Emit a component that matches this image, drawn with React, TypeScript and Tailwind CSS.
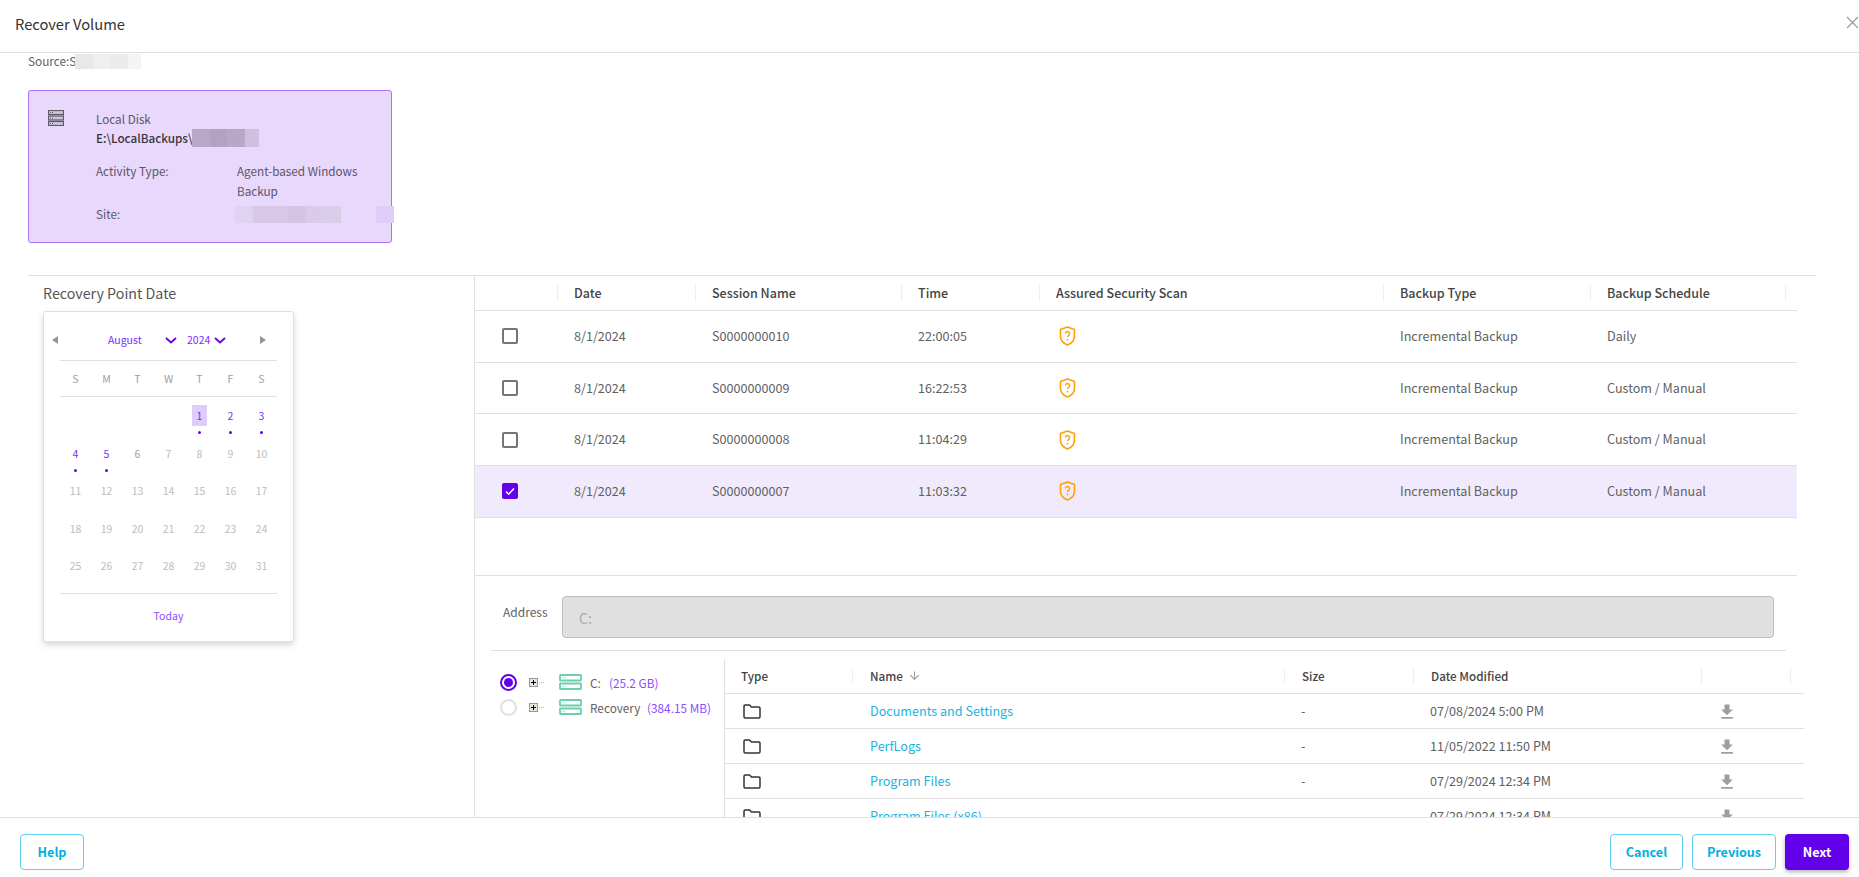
import { ArrowDown } from "lucide-react";

const sessions = [
  { name: "S0000000010", time: "22:00:05", schedule: "Daily", checked: false },
  { name: "S0000000009", time: "16:22:53", schedule: "Custom / Manual", checked: false },
  { name: "S0000000008", time: "11:04:29", schedule: "Custom / Manual", checked: false },
  { name: "S0000000007", time: "11:03:32", schedule: "Custom / Manual", checked: true },
];

const files = [
  { name: "Documents and Settings", modified: "07/08/2024 5:00 PM" },
  { name: "PerfLogs", modified: "11/05/2022 11:50 PM" },
  { name: "Program Files", modified: "07/29/2024 12:34 PM" },
  { name: "Program Files (x86)", modified: "07/29/2024 12:34 PM" },
];

const sessionCols = "grid grid-cols-[82px_138px_206px_138px_344px_207px_195px_12px]";
const fileCols = "grid grid-cols-[127px_432px_129px_288px_89px_14px]";

function Chevron() {
  return (
    <svg width="12" height="7" viewBox="0 0 12 7" fill="none" className="shrink-0">
      <path d="M1 1l5 4.5L11 1" stroke="#6200ea" strokeWidth="1.8" />
    </svg>
  );
}

function Shield() {
  return (
    <svg width="17" height="20" viewBox="0 0 17 20" fill="none" className="ml-[3px]">
      <path
        d="M8.5 1L15.5 3.5V10C15.5 14.5 12.5 17.5 8.5 19C4.5 17.5 1.5 14.5 1.5 10V3.5Z"
        stroke="#ffa000"
        strokeWidth="1.6"
        strokeLinejoin="round"
      />
      <path
        d="M6.4 7.6a2.1 2.1 0 1 1 3.2 1.8c-.7.4-1.1.9-1.1 1.7"
        stroke="#ffa000"
        strokeWidth="1.4"
      />
      <circle cx="8.5" cy="13.6" r="0.9" fill="#ffa000" />
    </svg>
  );
}

function DiskIcon() {
  return (
    <svg width="23" height="16" viewBox="0 0 23 16" fill="none" className="shrink-0">
      <rect x="1" y="1" width="21" height="5.5" rx="0.5" stroke="#6dcfb0" strokeWidth="1.8" />
      <rect x="1" y="9.5" width="21" height="5.5" rx="0.5" stroke="#6dcfb0" strokeWidth="1.8" />
      <path d="M3.5 3.7h3M3.5 12.2h3" stroke="#6dcfb0" strokeWidth="1" strokeDasharray="1 1" />
    </svg>
  );
}

function ServerIcon() {
  return (
    <svg width="16" height="16" viewBox="0 0 16 16" fill="none" className="shrink-0">
      <rect x="0.5" y="0.5" width="15" height="4" fill="#cfc6dc" stroke="#5f5a68" strokeWidth="1.2" />
      <rect x="0.5" y="6" width="15" height="4" fill="#cfc6dc" stroke="#5f5a68" strokeWidth="1.2" />
      <rect x="0.5" y="11.5" width="15" height="4" fill="#cfc6dc" stroke="#5f5a68" strokeWidth="1.2" />
      <path d="M2 2.5h3M2 8h3M2 13.5h3" stroke="#5f5a68" strokeDasharray="1 1" />
    </svg>
  );
}

function FolderIcon() {
  return (
    <svg width="18" height="15" viewBox="0 0 18 15" fill="none">
      <path
        d="M1 2.2C1 1.5 1.5 1 2.2 1H6.5L8.5 3H15.8C16.5 3 17 3.5 17 4.2V12.8C17 13.5 16.5 14 15.8 14H2.2C1.5 14 1 13.5 1 12.8Z"
        stroke="#333333"
        strokeWidth="1.5"
      />
    </svg>
  );
}

function DownloadIcon() {
  return (
    <svg width="20" height="20" viewBox="0 0 24 24" fill="#9e9e9e">
      <path d="M19 9h-4V3H9v6H5l7 7 7-7zM5 18v2h14v-2H5z" />
    </svg>
  );
}

function PlusBox() {
  return (
    <div className="flex items-center shrink-0">
      <div className="flex h-[9px] w-[9px] items-center justify-center border border-[#8a9bb0] bg-[#e8e4dc]">
        <svg width="7" height="7" viewBox="0 0 7 7">
          <path d="M3.5 1v5M1 3.5h5" stroke="#000000" strokeWidth="1" />
        </svg>
      </div>
      <div className="ml-[1px] w-[5px] border-t border-dotted border-[#b5b5b5]" />
    </div>
  );
}

function Calendar() {
  const weekdays = ["S", "M", "T", "W", "T", "F", "S"];
  const blanks = [0, 1, 2, 3];
  const days = Array.from({ length: 31 }, (_, i) => i + 1);

  return (
    <div className="mt-[6px] h-[331px] w-[251px] rounded-[3px] border border-[#e0e0e0] bg-white shadow-[0_3px_6px_rgba(0,0,0,0.16)]">
      <div className="mt-[20px] flex h-[16px] items-center pl-[8px] text-[10.5px] leading-[16px] text-[#7c2cff]">
        <span className="h-0 w-0 border-y-[4px] border-r-[6px] border-y-transparent border-r-[#8a9a9a]" />
        <span className="ml-[50px] w-[31px] whitespace-nowrap">August</span>
        <span className="ml-[26px]"><Chevron /></span>
        <span className="ml-[10px] w-[22px]">2024</span>
        <span className="ml-[5px]"><Chevron /></span>
        <span className="ml-[34px] h-0 w-0 border-y-[4px] border-l-[6px] border-y-transparent border-l-[#8a9a9a]" />
      </div>
      <div className="mx-auto mt-[12px] w-[217px] border-t border-[#e0e0e0]">
        <div className="grid h-[36px] grid-cols-7 items-center border-b border-[#e0e0e0] text-center text-[10.5px] text-[#a0a0a0]">
          {weekdays.map((d, i) => (
            <span key={i}>{d}</span>
          ))}
        </div>
        <div className="grid auto-rows-[37.5px] grid-cols-7 text-[10.5px]">
          {blanks.map((b) => (
            <div key={b} />
          ))}
          {days.map((d) => {
            const active = d <= 5;
            const color = active ? "text-[#7b2ffa]" : d === 6 ? "text-[#9e9e9e]" : "text-[#bdbdbd]";
            return (
              <div key={d} className="flex flex-col items-center">
                <span
                  className={`mt-[8px] h-[21px] w-[15px] text-center leading-[21px] ${color} ${d === 1 ? "bg-[#e0ccfb]" : ""}`}
                >
                  {d}
                </span>
                {active && <span className="mt-[5px] h-[3px] w-[3px] rounded-full bg-[#6200ea]" />}
              </div>
            );
          })}
        </div>
        <div className="mt-[8px] h-[47px] border-t border-[#e0e0e0] text-center text-[10.5px] leading-[44px] text-[#8b4dff]">
          Today
        </div>
      </div>
    </div>
  );
}

export default function App() {
  return (
    <div className="flex h-[877px] w-full flex-col overflow-hidden bg-white font-['Noto_Sans_CJK_SC','Noto_Sans',sans-serif] text-[12.6px] text-[#616161]">
      {/* title bar */}
      <div className="relative flex h-[53px] shrink-0 items-center border-b border-[#e0e0e0] pb-[4px] pl-[15px] text-[14.7px] text-[#333333]">
        Recover Volume
        <svg width="13" height="13" viewBox="0 0 13 13" className="absolute right-0 top-[16px]">
          <path d="M1 1l11 11M12 1L1 12" stroke="#9e9e9e" strokeWidth="1.3" />
        </svg>
      </div>

      <div className="min-h-0 flex-1 pl-[28px]">
        <div className="flex h-[16px] items-center text-[11.8px] leading-[14px]">
          <span className="w-[47px] shrink-0 whitespace-nowrap">Source:S</span>
          <span className="h-[15px] w-[18px] bg-[#e8e8e8]" />
          <span className="h-[15px] w-[17px] bg-[#efefef]" />
          <span className="h-[15px] w-[18px] bg-[#ebebeb]" />
          <span className="h-[15px] w-[13px] bg-[#f4f4f4]" />
        </div>

        {/* selected source card */}
        <div className="mt-[21px] flex h-[153px] w-[364px] rounded-[3px] border border-[#a874f5] bg-[#e7d8fc] pl-[19px] pt-[18px] text-[11.7px] text-[#5d5566]">
          <div className="pt-[1px]"><ServerIcon /></div>
          <div className="ml-[32px] w-[295px] shrink-0 leading-[20px]">
            <div className="h-[19px] leading-[19px]">Local Disk</div>
            <div className="flex h-[20px] items-center font-medium text-[#3a3440]">
              <span className="w-[96px] shrink-0 whitespace-nowrap">E:\LocalBackups\S</span>
              <span className="h-[18px] w-[18px] bg-[#b9a8c8]" />
              <span className="h-[18px] w-[17px] bg-[#b3a3c1]" />
              <span className="h-[18px] w-[18px] bg-[#b8a8c6]" />
              <span className="h-[18px] w-[14px] bg-[#cfc0e0]" />
            </div>
            <div className="mt-[13px] flex">
              <div className="w-[141px] shrink-0">Activity Type:</div>
              <div className="w-[128px]">Agent-based Windows Backup</div>
            </div>
            <div className="mt-[3px] flex h-[20px] items-center">
              <div className="w-[139px] shrink-0">Site:</div>
              <span className="h-[17px] w-[18px] shrink-0 bg-[#e0d2f2]" />
              <span className="h-[17px] w-[35px] shrink-0 bg-[#d6c8e6]" />
              <span className="h-[17px] w-[18px] shrink-0 bg-[#d3c5e3]" />
              <span className="h-[17px] w-[18px] shrink-0 bg-[#d9cbe9]" />
              <span className="h-[17px] w-[17px] shrink-0 bg-[#dacdea]" />
              <span className="ml-[35px] h-[17px] w-[18px] shrink-0 bg-[#dfcdf9]" />
            </div>
          </div>
        </div>

        <div className="mt-[32px] flex h-[542px] w-[1788px] border-t border-[#e0e0e0]">
          {/* recovery point calendar */}
          <div className="w-[446px] shrink-0 pl-[15px] pt-[6px]">
            <div className="text-[14.25px] leading-[21px] text-[#555555]">Recovery Point Date</div>
            <div className="pt-[2px]"><Calendar /></div>
          </div>

          <div className="flex min-w-0 flex-1 flex-col border-l border-[#e0e0e0]">
            {/* sessions */}
            <div className="w-[1322px]">
              <div className={`${sessionCols} h-[35px] items-center border-b border-[#e0e0e0] text-[12.5px] font-medium text-[#444444]`}>
                <div />
                {["Date", "Session Name", "Time", "Assured Security Scan", "Backup Type", "Backup Schedule"].map((h) => (
                  <div key={h} className="h-[16px] border-l border-[#eeeeee] pl-4 leading-[16px]">
                    {h}
                  </div>
                ))}
                <div className="h-[16px] border-l border-[#eeeeee]" />
              </div>
              {sessions.map((s) => (
                <div
                  key={s.name}
                  className={`${sessionCols} h-[51.7px] items-center border-b border-[#e0e0e0] ${s.checked ? "bg-[#f1eafd]" : ""}`}
                >
                  <div className="pl-[27px]">
                    {s.checked ? (
                      <div className="flex h-[16px] w-[16px] items-center justify-center rounded-[2px] bg-[#6200ea]">
                        <svg width="12" height="12" viewBox="0 0 12 12" fill="none">
                          <path d="M2 6.5l2.7 2.7L10 3.5" stroke="#ffffff" strokeWidth="1.5" />
                        </svg>
                      </div>
                    ) : (
                      <div className="h-[16px] w-[16px] rounded-[2px] border-2 border-[#757575]" />
                    )}
                  </div>
                  <div className="pl-[17px]">8/1/2024</div>
                  <div className="pl-[17px]">{s.name}</div>
                  <div className="pl-[17px]">{s.time}</div>
                  <div className="pl-[17px]"><Shield /></div>
                  <div className="pl-[17px]">Incremental Backup</div>
                  <div className="pl-[17px]">{s.schedule}</div>
                  <div />
                </div>
              ))}
            </div>

            {/* address */}
            <div className="mt-[57px] w-[1322px] border-t border-[#e0e0e0]">
              <div className="flex h-[74px] pl-[28px] pt-[20px]">
                <div className="w-[59px] shrink-0 text-[12px] leading-[32px]">Address</div>
                <div className="h-[42px] w-[1212px] rounded-[4px] border border-[#bdbdbd] bg-[#e0e0e0] pl-[16px] text-[14px] leading-[42px] text-[#ababab]">
                  C:
                </div>
              </div>
              <div className="ml-[16px] w-[1295px] border-t border-[#e0e0e0]" />
            </div>

            {/* browse tree + files */}
            <div className="mt-[8px] flex min-h-0 flex-1 overflow-hidden">
              <div className="w-[249px] shrink-0 pl-[25px] pt-[11px] text-[11.8px] leading-[25px]">
                <div className="flex h-[25px] items-center">
                  <div className="flex h-[17px] w-[17px] shrink-0 items-center justify-center rounded-full border-2 border-[#6200ea]">
                    <div className="h-[9px] w-[9px] rounded-full bg-[#6200ea]" />
                  </div>
                  <div className="ml-[12px]"><PlusBox /></div>
                  <div className="ml-[15px]"><DiskIcon /></div>
                  <span className="ml-[8px] w-[19px]">C:</span>
                  <span className="text-[#8a4dff]">(25.2 GB)</span>
                </div>
                <div className="flex h-[25px] items-center">
                  <div className="h-[17px] w-[17px] shrink-0 rounded-full border-2 border-[#e0e0e0]" />
                  <div className="ml-[12px]"><PlusBox /></div>
                  <div className="ml-[15px]"><DiskIcon /></div>
                  <span className="ml-[8px] w-[57px]">Recovery</span>
                  <span className="whitespace-nowrap text-[#8a4dff]">(384.15 MB)</span>
                </div>
              </div>

              <div className="h-full w-[1080px] shrink-0 overflow-hidden border-l border-[#e0e0e0]">
                <div className={`${fileCols} h-[35px] items-center border-b border-[#e0e0e0] text-[11.7px] font-medium text-[#444444]`}>
                  <div className="pl-[16px]">Type</div>
                  <div className="flex h-[16px] items-center gap-[5px] border-l border-[#eeeeee] pl-[17px]">
                    Name <ArrowDown size={13} color="#9e9e9e" />
                  </div>
                  <div className="h-[16px] border-l border-[#eeeeee] pl-[17px] leading-[16px]">Size</div>
                  <div className="h-[16px] border-l border-[#eeeeee] pl-[17px] leading-[16px]">Date Modified</div>
                  <div className="h-[16px] border-l border-[#eeeeee]" />
                  <div className="h-[16px] border-l border-[#eeeeee]" />
                </div>
                {files.map((f) => (
                  <div key={f.name} className={`${fileCols} h-[35px] items-center border-b border-[#e0e0e0] pt-[2px]`}>
                    <div className="pl-[18px]"><FolderIcon /></div>
                    <div className="pl-[18px] text-[#1ab3e0]">{f.name}</div>
                    <div className="pl-[17px]">-</div>
                    <div className="pl-[17px]">{f.modified}</div>
                    <div className="pl-[16px]"><DownloadIcon /></div>
                    <div />
                  </div>
                ))}
              </div>
            </div>
          </div>
        </div>
      </div>

      {/* footer */}
      <div className="flex h-[60px] shrink-0 items-start justify-between border-t border-[#e0e0e0] pl-[20px] pr-[10px] pt-[16px] text-[12.6px] font-semibold leading-[34px]">
        <button className="h-[36px] w-[64px] rounded-[4px] border border-[#5fd0ee] text-[#00b0e0]">Help</button>
        <div className="flex gap-[9px]">
          <button className="h-[36px] w-[73px] rounded-[4px] border border-[#5fd0ee] text-[#00b0e0]">Cancel</button>
          <button className="h-[36px] w-[84px] rounded-[4px] border border-[#5fd0ee] text-[#00b0e0]">Previous</button>
          <button className="h-[36px] w-[64px] rounded-[4px] bg-[#6200ea] text-white shadow-[0_2px_4px_rgba(0,0,0,0.3)]">Next</button>
        </div>
      </div>
    </div>
  );
}
